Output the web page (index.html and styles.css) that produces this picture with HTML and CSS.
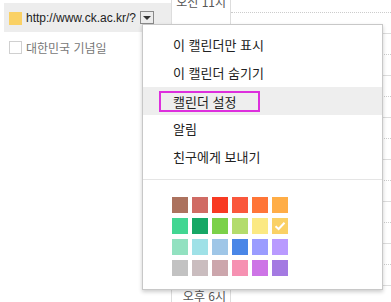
FILE: index.html
```html
<!DOCTYPE html>
<html lang="ko">
<head>
    <meta charset="UTF-8">
    <title>캘린더</title>
    <link rel="stylesheet" href="styles.css">
</head>
<body>
    <div class="page">
        <aside class="sidebar">
            <div class="cal-row selected">
                <span class="swatch"></span>
                <span class="cal-name">http://www.ck.ac.kr/?</span>
                <span class="drop-btn"><span class="arrow"></span></span>
            </div>
            <div class="cal-row">
                <span class="checkbox"></span>
                <span class="cal-name muted">대한민국 기념일</span>
            </div>
        </aside>

        <section class="calendar">
            <div class="hours">
                <div class="time-col">
                    <div class="time-label">오전 11시</div>
                    <!-- 메뉴에 가려진 시간 -->
                    <div class="time-label"></div>
                    <div class="time-label"></div>
                    <div class="time-label"></div>
                    <div class="time-label"></div>
                    <div class="time-label"></div>
                    <div class="time-label"></div>
                    <div class="time-label">오후 6시</div>
                </div>
                <div class="grid-col">
                    <div class="hour-row"><div class="half"></div></div>
                    <div class="hour-row"><div class="half"></div></div>
                    <div class="hour-row"><div class="half"></div></div>
                    <div class="hour-row"><div class="half"></div></div>
                    <div class="hour-row"><div class="half"></div></div>
                    <div class="hour-row"><div class="half"></div></div>
                    <div class="hour-row"><div class="half"></div></div>
                    <div class="hour-row"><div class="half"></div></div>
                </div>
            </div>
        </section>
    </div>

    <!-- 캘린더 옵션 메뉴 -->
    <div class="menu">
        <div class="menu-item">이 캘린더만 표시</div>
        <div class="menu-item">이 캘린더 숨기기</div>
        <div class="menu-item active"><span class="marked">캘린더 설정</span></div>
        <div class="menu-item">알림</div>
        <div class="menu-item">친구에게 보내기</div>
        <div class="menu-sep"></div>
        <div class="palette">
            <span class="chip" style="background:#ac725e"></span>
            <span class="chip" style="background:#d06b64"></span>
            <span class="chip" style="background:#f83a22"></span>
            <span class="chip" style="background:#fa573c"></span>
            <span class="chip" style="background:#ff7537"></span>
            <span class="chip" style="background:#ffad46"></span>
            <span class="chip" style="background:#42d692"></span>
            <span class="chip" style="background:#16a765"></span>
            <span class="chip" style="background:#7bd148"></span>
            <span class="chip" style="background:#b3dc6c"></span>
            <span class="chip" style="background:#fbe983"></span>
            <span class="chip" style="background:#fad165">
                <svg width="16" height="16" viewBox="0 0 16 16"><path d="M3.5 8.2 L6.6 11 L12.5 4.8" fill="none" stroke="#fff" stroke-width="2"/></svg>
            </span>
            <span class="chip" style="background:#92e1c0"></span>
            <span class="chip" style="background:#9fe1e7"></span>
            <span class="chip" style="background:#9fc6e7"></span>
            <span class="chip" style="background:#4986e7"></span>
            <span class="chip" style="background:#9a9cff"></span>
            <span class="chip" style="background:#b99aff"></span>
            <span class="chip" style="background:#c2c2c2"></span>
            <span class="chip" style="background:#cabdbf"></span>
            <span class="chip" style="background:#cca6ac"></span>
            <span class="chip" style="background:#f691b2"></span>
            <span class="chip" style="background:#cd74e6"></span>
            <span class="chip" style="background:#a47ae2"></span>
        </div>
    </div>
</body>
</html>
```

FILE: styles.css
```css
body {
    margin: 0;
    background: #fff;
    font-family: Arial, "Liberation Sans", "Noto Sans CJK KR", sans-serif;
    color: #222;
    width: 391px;
    height: 302px;
    overflow: hidden;
    position: relative;
}

.page {
    display: flex;
    height: 302px;
}

/* 왼쪽 캘린더 목록 */
.sidebar {
    width: 167px;
    padding: 3px 0 0 4px;
    flex-shrink: 0;
}

.cal-row {
    display: flex;
    align-items: center;
    height: 29px;
    padding-left: 5px;
    font-size: 12px;
}

.cal-row.selected {
    background: #ededed;
}

.cal-row + .cal-row {
    height: 30px;
}

.swatch {
    width: 13px;
    height: 13px;
    background: #fad165;
    margin-top: 2px;
}

.checkbox {
    width: 11px;
    height: 11px;
    border: 1px solid #d0d0d0;
    background: #fff;
}

.cal-name {
    margin-left: 4px;
    font-family: "Liberation Sans", Arial, "Noto Sans CJK KR", sans-serif;
}

.cal-name.muted {
    color: #777;
    font-family: "Noto Sans CJK KR", sans-serif;
}

.drop-btn {
    display: flex;
    align-items: center;
    justify-content: center;
    width: 12px;
    height: 11px;
    margin-left: 4px;
    border: 1px solid #8a8a8a;
    background: #ececec;
}

.arrow {
    width: 0;
    height: 0;
    border-left: 4px solid transparent;
    border-right: 4px solid transparent;
    border-top: 4px solid #333;
}

/* 시간 그리드 */
.calendar {
    flex: 1;
    overflow: hidden;
    border-left: 1px solid #ddd;
}

.hours {
    display: flex;
    margin-top: -9px;
}

.time-col {
    width: 58px;
    border-right: 1px solid #ddd;
}

.time-label {
    height: 42px;
    box-sizing: border-box;
    padding: 3px 4px 0 0;
    text-align: right;
    font-family: "Noto Sans CJK KR", sans-serif;
    font-size: 12px;
    line-height: 16px;
    color: #555;
}

.grid-col {
    flex: 1;
}

.hour-row {
    height: 41px;
    border-top: 1px solid #ddd;
}

.half {
    height: 20px;
    border-bottom: 1px dotted #ccc;
}

/* 옵션 메뉴 */
.menu {
    position: absolute;
    left: 142px;
    top: 24px;
    width: 239px;
    padding: 6px 0 13px;
    background: #fff;
    border: 1px solid #c8c8c8;
    box-shadow: 0 2px 4px rgba(0, 0, 0, 0.2);
    font-family: "Noto Sans CJK KR", sans-serif;
    font-size: 13px;
}

.menu-item {
    height: 28px;
    line-height: 28px;
    padding-left: 30px;
    color: #222;
}

.menu-item.active {
    background: #eee;
    padding-left: 16px;
    display: flex;
    align-items: center;
}

.marked {
    box-sizing: border-box;
    width: 101px;
    height: 21px;
    line-height: 17px;
    padding-left: 12px;
    border: 2px solid #dd2fdd;
}

.menu-sep {
    height: 1px;
    background: #e5e5e5;
    margin: 8px 0 17px;
}

.palette {
    display: grid;
    grid-template-columns: repeat(6, 16px);
    column-gap: 4px;
    row-gap: 5px;
    margin-left: 29px;
}

.chip {
    width: 16px;
    height: 16px;
    display: block;
}

.chip svg {
    display: block;
}
```
